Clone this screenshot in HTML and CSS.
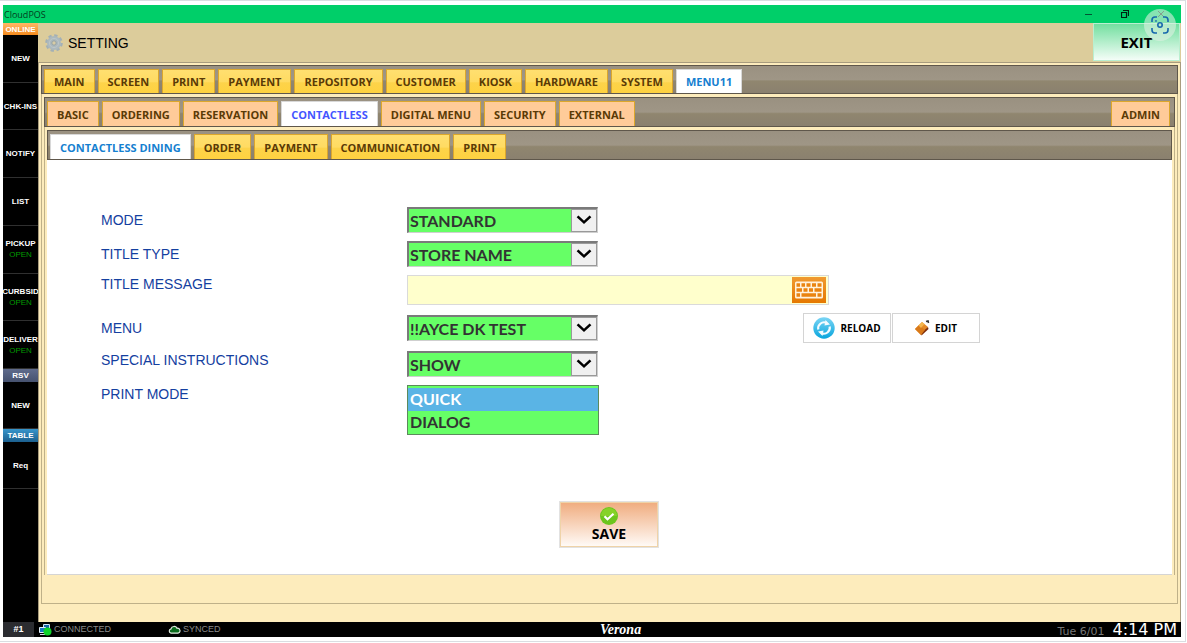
FILE: index.html
```html
<!DOCTYPE html>
<html lang="en">
<head>
  <meta charset="UTF-8" />
  <title>CloudPOS</title>
  <link rel="stylesheet" href="styles.css">
</head>
<body>
  <div class="frame">
    <div class="app">

      <!-- Window title bar -->
      <div class="titlebar">
        <span>CloudPOS</span>
        <div class="window-controls">
          <svg width="8" height="8" viewBox="0 0 8 8"><path d="M0 4.5h7" stroke="#053" fill="none"/></svg>
          <svg width="8" height="8" viewBox="0 0 8 8"><path d="M.5 2.5h5v5h-5zM2 .5h5.500v5.500" stroke="#021" stroke-width="1.200" fill="none"/></svg>
          <svg width="8" height="8" viewBox="0 0 8 8"><path d="M1 1l6 6M7 1l-6 6" stroke="#021" fill="none"/></svg>
        </div>
      </div>

      <div class="body">
        <!-- Order type sidebar -->
        <aside class="sidebar">
          <div class="side-head side-online">ONLINE</div>
          <div class="side-group">
            <button class="side-item">NEW</button>
            <button class="side-item">CHK-INS</button>
            <button class="side-item">NOTIFY</button>
            <button class="side-item">LIST</button>
            <button class="side-item">PICKUP<span>OPEN</span></button>
            <button class="side-item">CURBSID<span>OPEN</span></button>
            <button class="side-item">DELIVER<span>OPEN</span></button>
          </div>
          <div class="side-head side-rsv">RSV</div>
          <button class="side-item">NEW</button>
          <div class="side-head side-table">TABLE</div>
          <button class="side-item">Req</button>
        </aside>

        <div class="content">
          <header class="header">
            <svg class="gear" width="18" height="18" viewBox="0 0 18 18">
              <circle cx="9" cy="9" r="7.300" fill="none" stroke="#a3b0b6" stroke-width="3" stroke-dasharray="3.200 2.530"/>
              <circle cx="9" cy="9" r="7" fill="#adb9bd"/>
              <circle cx="9" cy="9" r="4.600" fill="none" stroke="#bcc6c9"/>
              <circle cx="9" cy="9" r="2.200" fill="#d8cca5" stroke="#94a2a8"/>
            </svg>
            <h1>SETTING</h1>
            <button class="exit">EXIT</button>
          </header>

          <main class="panels">
            <nav class="tabs">
              <button class="tab">MAIN</button>
              <button class="tab">SCREEN</button>
              <button class="tab">PRINT</button>
              <button class="tab">PAYMENT</button>
              <button class="tab">REPOSITORY</button>
              <button class="tab">CUSTOMER</button>
              <button class="tab">KIOSK</button>
              <button class="tab">HARDWARE</button>
              <button class="tab">SYSTEM</button>
              <button class="tab active">MENU11</button>
            </nav>

            <div class="panel">
              <nav class="tabs tabs-peach">
                <button class="tab">BASIC</button>
                <button class="tab">ORDERING</button>
                <button class="tab">RESERVATION</button>
                <button class="tab active">CONTACTLESS</button>
                <button class="tab">DIGITAL MENU</button>
                <button class="tab">SECURITY</button>
                <button class="tab">EXTERNAL</button>
                <button class="tab tab-right">ADMIN</button>
              </nav>

              <div class="panel panel-inner">
                <nav class="tabs">
                  <button class="tab active">CONTACTLESS DINING</button>
                  <button class="tab">ORDER</button>
                  <button class="tab">PAYMENT</button>
                  <button class="tab">COMMUNICATION</button>
                  <button class="tab">PRINT</button>
                </nav>

                <form class="settings">
                  <div class="fields">
                    <label for="mode">MODE</label>
                    <div class="combo">
                      <select id="mode"><option>STANDARD</option></select>
                      <svg viewBox="0 0 26 22"><path d="M6 6.500l7 6.500 7-6.500" fill="none" stroke="#000" stroke-width="2.800"/></svg>
                    </div>

                    <label for="title-type">TITLE TYPE</label>
                    <div class="combo">
                      <select id="title-type"><option>STORE NAME</option></select>
                      <svg viewBox="0 0 26 22"><path d="M6 6.500l7 6.500 7-6.500" fill="none" stroke="#000" stroke-width="2.800"/></svg>
                    </div>

                    <label class="top" for="title-message">TITLE MESSAGE</label>
                    <div class="message">
                      <input type="text" id="title-message">
                      <button type="button" class="keyboard" aria-label="Keyboard">
                        <svg width="34" height="26" viewBox="0 0 34 26">
                          <rect x="3" y="4.500" width="28" height="17" rx="1.500" fill="#fff2dd"/>
                          <path d="M4.500 8h3.500M9.500 8h3.500M14.500 8h4M20 8h4M25.500 8h4M4.500 13h5.500M11.500 13h4M17 13h4M22.500 13h7M4.500 18h3.500M9.500 18h14.500M25.500 18h4" stroke="#ea8410" stroke-width="3.500"/>
                        </svg>
                      </button>
                    </div>

                    <label for="menu">MENU</label>
                    <div class="menu-row">
                      <div class="combo">
                        <select id="menu"><option>!!AYCE DK TEST</option></select>
                        <svg viewBox="0 0 26 22"><path d="M6 6.500l7 6.500 7-6.500" fill="none" stroke="#000" stroke-width="2.800"/></svg>
                      </div>
                      <div class="actions">
                        <button type="button">
                          <svg width="22" height="22" viewBox="0 0 22 22">
                            <defs>
                              <linearGradient id="blue" x2="0" y2="1"><stop stop-color="#7bd5f5"/><stop offset="1" stop-color="#08a5dd"/></linearGradient>
                            </defs>
                            <circle cx="11" cy="11" r="10.700" fill="url(#blue)"/>
                            <path d="M5.300 12.500a6 6 0 0 1 8-6.800M16.700 9.500a6 6 0 0 1-8 6.800" fill="none" stroke="#f4fbff" stroke-width="2.200"/>
                            <path d="M12.500 3l4.500 4.500-5.500 1zM9.500 19L5 14.500l5.500-1z" fill="#f4fbff"/>
                          </svg>
                          RELOAD
                        </button>
                        <button type="button">
                          <svg width="15" height="16" viewBox="0 0 15 16">
                            <path d="M7 2l6 5-7 8-6-6z" fill="#e58a26"/>
                            <path d="M13 7l.5 2-7 6.500L6 13z" fill="#7d2b08"/>
                            <path d="M4 5l6 5-4 5-6-6z" fill="#d97a1a"/>
                            <path d="M7 2l2.500 2L6 8 3.500 5.500z" fill="#f4b64d"/>
                            <path d="M11 1.500l2-.5.5 2" fill="none" stroke="#333" stroke-width="1.600"/>
                          </svg>
                          EDIT
                        </button>
                      </div>
                    </div>

                    <label class="top" for="special">SPECIAL INSTRUCTIONS</label>
                    <div class="combo">
                      <select id="special"><option>SHOW</option></select>
                      <svg viewBox="0 0 26 22"><path d="M6 6.500l7 6.500 7-6.500" fill="none" stroke="#000" stroke-width="2.800"/></svg>
                    </div>

                    <label class="top" for="print-mode">PRINT MODE</label>
                    <select class="listbox" id="print-mode" size="2">
                      <option selected>QUICK</option>
                      <option>DIALOG</option>
                    </select>
                  </div>

                  <button type="button" class="save">
                    <svg width="18" height="18" viewBox="0 0 18 18">
                      <circle cx="9" cy="9" r="9" fill="#6cc51d"/>
                      <path d="M1 9a8 8 0 0 1 16 0z" fill="#86d228"/>
                      <path d="M4.500 9.200l3 3 6-5.500" fill="none" stroke="#fff" stroke-width="2.200"/>
                    </svg>
                    SAVE
                  </button>
                </form>
              </div>
            </div>
          </main>
        </div>
      </div>

      <!-- Status bar -->
      <footer class="status">
        <span class="station">#1</span>
        <span class="status-item connected">
          <svg width="13" height="13" viewBox="0 0 13 13">
            <path d="M4.500 1.500h6v5h-6z" fill="#1565a8" stroke="#cfe4f5"/>
            <path d="M.5 4.500h6v5h-6z" fill="#1a78c2" stroke="#e4f0fa"/>
            <path d="M1 11.500h5" stroke="#dde"/>
            <circle cx="8.500" cy="8.500" r="4" fill="#0fd32b"/>
          </svg>
          CONNECTED
        </span>
        <span class="status-item">
          <svg width="13" height="9" viewBox="0 0 13 9"><path d="M3 8.200a2.200 2.200 0 0 1 0-4.300A3.200 3.200 0 0 1 9 3.300a2.500 2.500 0 0 1 1 4.900z" fill="#0a6a1c" stroke="#dfe9df" stroke-width="1.200"/></svg>
          SYNCED
        </span>
        <span class="store">Verona</span>
        <span class="clock"><small>Tue 6/01</small><time>4:14 PM</time></span>
      </footer>
    </div>

    <button class="lens" aria-label="Visual search">
      <svg width="18" height="18" viewBox="0 0 18 18" fill="none" stroke="#1767ad" stroke-width="1.600">
        <path d="M1 6V4a3 3 0 0 1 3-3h2M12 1h2a3 3 0 0 1 3 3v2M17 12v2a3 3 0 0 1-3 3h-2M6 17H4a3 3 0 0 1-3-3v-2"/>
        <circle cx="9" cy="9" r="2.200"/>
        <circle cx="5" cy="5" r=".3"/>
      </svg>
    </button>
  </div>
</body>
</html>
```

FILE: styles.css
```css
:root {
  --cream: #fdecbc;
  --sand: #dccc9b;
  --line: #5f574b;
  --label: #1440a0;
  --green: #66ff66;
  --ui-font: "Open Sans", "Noto Sans", sans-serif;
  --label-font: "Liberation Sans", Arial, sans-serif;
}

* {
  box-sizing: border-box;
}

body {
  margin: 0;
  background: white;
  font-family: var(--label-font);
}

button {
  margin: 0;
  padding: 0;
  border: none;
  font-family: var(--ui-font);
  font-weight: bold;
  cursor: pointer;
}

svg {
  flex: none;
}

.frame {
  position: relative;
  min-height: calc(100vh - 1px);
  margin-right: 1px;
  padding: 4px 4px 4px 3px;
  border: 1px solid #dadde1;
  border-left: none;
  display: flex;
}

.app {
  flex: 1;
  min-width: 0;
  display: flex;
  flex-direction: column;
}

/* title bar */
.titlebar {
  height: 18px;
  padding: 0 16px 0 1px;
  display: flex;
  align-items: center;
  justify-content: space-between;
  background: #00cf69;
  color: #033c20;
  font-family: var(--ui-font);
  font-size: 9px;
}

.window-controls {
  display: flex;
  gap: 28px;
}

.body {
  flex: 1;
  display: flex;
}

/* sidebar */
.sidebar {
  width: 35px;
  flex: none;
  display: flex;
  flex-direction: column;
  overflow: hidden;
  background: black;
}

.side-head {
  height: 13px;
  color: white;
  font-size: 8px;
  line-height: 13px;
  font-weight: bold;
  text-align: center;
}

.side-online {
  height: 12px;
  background: linear-gradient(#ffb867, #f58b1e);
}

.side-rsv {
  background: linear-gradient(#5f6b8c, #46526f);
}

.side-table {
  background: linear-gradient(#3795cb, #1c608f);
}

.side-group {
  height: 334px;
  display: flex;
  flex-direction: column;
}

.side-item {
  height: 47px;
  display: flex;
  flex-direction: column;
  align-items: center;
  justify-content: center;
  background: black;
  border-bottom: 1px solid #303030;
  color: white;
  font-family: var(--label-font);
  font-size: 8px;
  line-height: 11px;
}

.side-group .side-item {
  flex: 1;
}

.side-item span {
  color: #009a00;
  font-weight: normal;
}

/* header */
.content {
  flex: 1;
  min-width: 0;
  display: flex;
  flex-direction: column;
}

.header {
  height: 39px;
  padding: 0 1px 0 7px;
  display: flex;
  align-items: center;
  gap: 5px;
  background: var(--sand);
}

h1 {
  margin: 0;
  flex: 1;
  font-size: 14px;
  font-weight: normal;
}

.exit {
  width: 87px;
  height: 38px;
  align-self: flex-start;
  border: 1px solid #b9efd0;
  background: linear-gradient(#73dfa0, #f4fdf7);
  font-size: 15px;
}

/* nested panels */
.panels {
  flex: 1;
  padding: 2px 2px 0;
  display: flex;
  flex-direction: column;
  background: var(--cream);
  border: 1px solid #a89c7e;
  border-bottom: none;
}

.panel {
  flex: 1;
  display: flex;
  flex-direction: column;
  padding: 3px 2px 28px;
  margin-bottom: 18px;
  border: 1px solid #bfb189;
  border-top: none;
}

.panel-inner {
  margin: 0;
  padding: 3px 2px 0;
  border-bottom: none;
}

.tabs {
  height: 29px;
  padding: 3px 2px 0;
  display: flex;
  gap: 3px;
  border: 1px solid var(--line);
  background: linear-gradient(#9a9181, #9f9686 50%, #90866f 56%, #8a806f);
}

.panel > .tabs {
  height: 30px;
}

.tab {
  padding: 0 9px;
  border: 1px solid #dca72c;
  border-bottom: none;
  background: linear-gradient(#ffdf70, #ffdb62 50%, #fdd34a 56%, #ffd240);
  color: #5a3a06;
  font-size: 11px;
  white-space: nowrap;
}

.tabs-peach .tab {
  background: #ffcb99;
}

.tab.active,
.tabs-peach .tab.active {
  border-color: #d8d8d8;
  background: white;
  color: #1580d0;
}

.tabs-peach .tab.active {
  color: #4455ff;
}

.tabs-peach .tab-right {
  margin-left: auto;
  margin-right: 2px;
}

/* settings form */
.settings {
  flex: 1;
  padding: 47px 55px 26px 54px;
  display: flex;
  flex-direction: column;
  background: white;
  border-bottom: 1px solid #d5d5d5;
}

.fields {
  display: grid;
  grid-template-columns: 306px 1fr;
  row-gap: 8px;
  align-items: center;
}

.fields label {
  color: var(--label);
  font-size: 14px;
  line-height: 18px;
}

.fields label.top {
  align-self: start;
}

.combo {
  position: relative;
  width: 191px;
  height: 26px;
}

.combo select {
  width: 100%;
  height: 100%;
  padding: 0 28px 0 1px;
  appearance: none;
  border: 1px solid #cfcfcf;
  border-top: 2px solid #7a7a7a;
  border-left: 2px solid #7a7a7a;
  border-radius: 0;
  background: var(--green);
  color: #333;
  font-family: Lato, var(--ui-font);
  font-size: 16px;
  font-weight: 700;
}

.combo svg {
  position: absolute;
  top: 2px;
  right: 1px;
  width: 26px;
  height: 23px;
  border: 1px solid #999;
  background: #f0f0f0;
  pointer-events: none;
}

.message {
  width: 422px;
  height: 30px;
  padding: 1px 2px 1px 0;
  display: flex;
  border: 1px solid #dadada;
  background: #ffffcc;
}

.message input {
  flex: 1;
  min-width: 0;
  border: none;
  background: transparent;
  font-size: 16px;
}

.keyboard {
  height: 26px;
  background: linear-gradient(#f09a30, #e57800);
}

.menu-row {
  width: 573px;
  display: flex;
  align-items: center;
  justify-content: space-between;
}

.actions {
  display: flex;
  gap: 1px;
}

.actions button {
  width: 88px;
  height: 30px;
  display: flex;
  align-items: center;
  justify-content: center;
  gap: 5px;
  border: 1px solid #d4d4d4;
  background: white;
  font-size: 10px;
}

.listbox {
  width: 192px;
  height: 50px;
  padding: 2px 0 0;
  overflow: hidden;
  border: 1px solid #5c8a5c;
  border-radius: 0;
  outline: none;
  background: var(--green);
}

.listbox option {
  height: 23px;
  min-height: 23px;
  padding: 1px 2px;
  color: #333;
  font-family: Lato, var(--ui-font);
  font-size: 16px;
  font-weight: 700;
  line-height: 21px;
}

.listbox option:checked {
  background: #5ab4e5 linear-gradient(#5ab4e5, #5ab4e5);
  color: white;
}

.save {
  width: 100px;
  height: 47px;
  margin: auto auto 0;
  display: flex;
  flex-direction: column;
  align-items: center;
  justify-content: center;
  border: 2px solid #efd3a8;
  outline: 1px solid #e2e2e2;
  outline-offset: -1px;
  background: linear-gradient(#f0ad80, #fffaf6);
  font-size: 14px;
  line-height: 18px;
}

/* status bar */
.status {
  height: 15px;
  display: grid;
  grid-template-columns: 31px 134px 4fr auto 5fr;
  grid-template-rows: 15px;
  align-items: center;
  background: black;
  color: #8a8a8a;
  font-size: 9px;
  line-height: 15px;
}

.station {
  background: #2b2c30;
  color: white;
  font-weight: bold;
  text-align: center;
}

.status-item {
  display: flex;
  align-items: center;
  gap: 2px;
}

.connected {
  padding-left: 5px;
}

.store {
  color: white;
  font-family: "Liberation Serif", serif;
  font-size: 14px;
  font-style: italic;
  font-weight: bold;
}

.clock {
  padding: 2px 4px 0 0;
  display: flex;
  justify-content: flex-end;
  align-items: baseline;
  gap: 8px;
  font-family: "DejaVu Sans", sans-serif;
}

.clock small {
  font-size: 11px;
  color: #777;
}

.clock time {
  color: white;
  font-size: 16px;
}

/* floating search button */
.lens {
  position: absolute;
  top: 8px;
  right: 9px;
  width: 32px;
  height: 32px;
  display: flex;
  align-items: center;
  justify-content: center;
  border-radius: 50%;
  background: rgba(224, 240, 226, 0.6);
}
```
